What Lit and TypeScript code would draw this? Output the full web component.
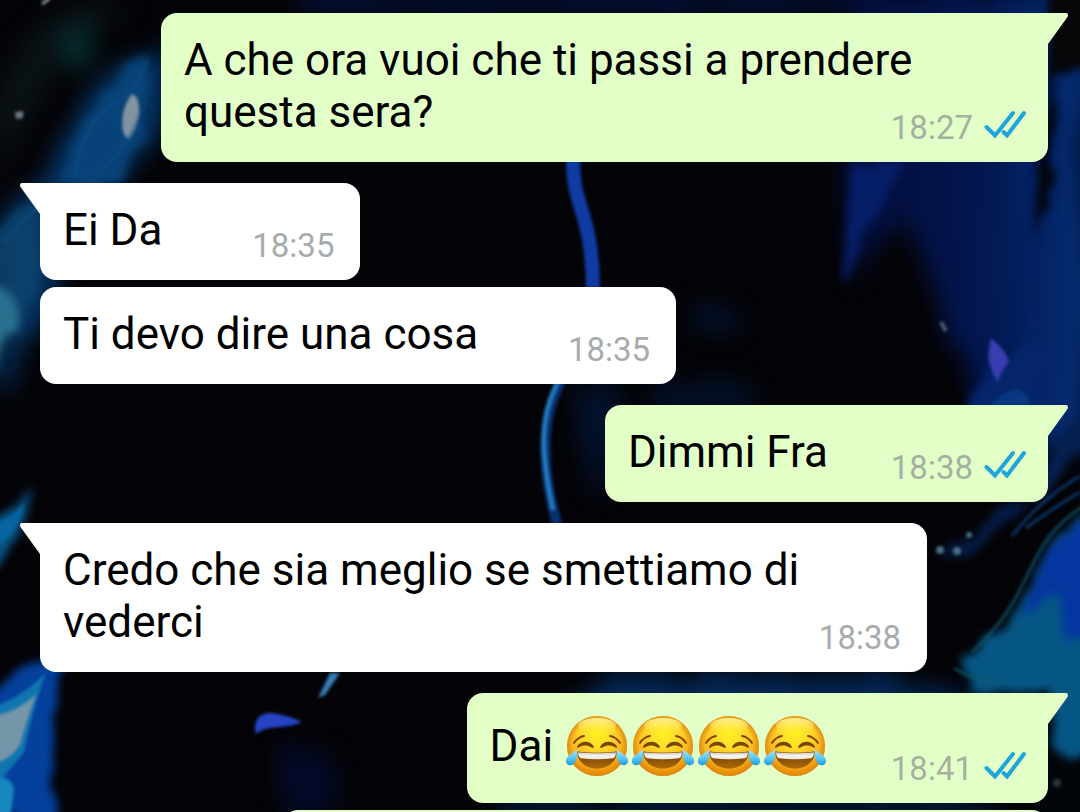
import { LitElement, html, css, svg, nothing } from "lit";
import { customElement, property } from "lit/decorators.js";

interface Message {
  text: string;
  time: string;
  own: boolean;
  first: boolean;
  joy?: number;
}

const MESSAGES: Message[] = [
  { text: "A che ora vuoi che ti passi a prendere questa sera?", time: "18:27", own: true, first: true },
  { text: "Ei Da", time: "18:35", own: false, first: true },
  { text: "Ti devo dire una cosa", time: "18:35", own: false, first: false },
  { text: "Dimmi Fra", time: "18:38", own: true, first: true },
  { text: "Credo che sia meglio se smettiamo di vederci", time: "18:38", own: false, first: true },
  { text: "Dai ", time: "18:41", own: true, first: true, joy: 4 },
];

/* Face with tears of joy */
@customElement("joy-face")
export class JoyFace extends LitElement {
  static styles = css`
    :host { display: inline-block; width: 66px; height: 65px; vertical-align: -18px; }
    .face { display: block; width: 100%; height: 100%; }
  `;
  render() {
    return html`<svg class="face" viewBox="-1 0 66 65" role="img" aria-label="Faccina che ride con lacrime">
      <defs>
        <radialGradient id="skin" cx="32" cy="20" r="43" gradientUnits="userSpaceOnUse">
          <stop offset="0" stop-color="#fff01f" />
          <stop offset=".32" stop-color="#fedd2b" />
          <stop offset=".62" stop-color="#fbb91f" />
          <stop offset="1" stop-color="#e88806" />
        </radialGradient>
        <radialGradient id="edge" cx="32" cy="32" r="30" gradientUnits="userSpaceOnUse">
          <stop offset=".8" stop-color="#e08a10" stop-opacity="0" />
          <stop offset="1" stop-color="#d98512" stop-opacity=".8" />
        </radialGradient>
        <linearGradient id="shine" x1="0" y1="0" x2="0" y2="1">
          <stop offset="0" stop-color="#fff6a8" stop-opacity=".9" />
          <stop offset="1" stop-color="#fff34a" stop-opacity="0" />
        </linearGradient>
        <linearGradient id="mouth" x1="0" y1="0" x2="0" y2="1">
          <stop offset="0" stop-color="#6b3b04" />
          <stop offset="1" stop-color="#ad6a08" />
        </linearGradient>
        <linearGradient id="teeth" x1="0" y1="0" x2="0" y2="1">
          <stop offset="0" stop-color="#c9c4bd" />
          <stop offset=".5" stop-color="#f7f5f2" />
          <stop offset="1" stop-color="#ece7e0" />
        </linearGradient>
        <linearGradient id="tear" x1="0" y1="0" x2="0" y2="1">
          <stop offset="0" stop-color="#a5e6fa" />
          <stop offset=".6" stop-color="#55c3f3" />
          <stop offset="1" stop-color="#1d97dd" />
        </linearGradient>
      </defs>
      <circle cx="32" cy="32" r="30" fill="url(#skin)" />
      <circle cx="32" cy="32" r="30" fill="url(#edge)" />
      <ellipse cx="32" cy="12" rx="19" ry="8" fill="url(#shine)" />
      <g fill="none" stroke="#7a4606" stroke-linecap="round">
        <path d="M9 29Q13 23 19 22" stroke-width="1.800" />
        <path d="M55 29Q51 23 45 22" stroke-width="1.800" />
      </g>
      <g fill="#7a4606">
        <path d="M12 32.500C15 26.500 25 26 28.500 32C29.500 34 28 34.500 26 33.200C22 31 18 31.200 14.500 33C12.500 34.200 11.500 33.600 12 32.500Z" />
        <path d="M52 32.500C49 26.500 39 26 35.500 32C34.500 34 36 34.500 38 33.200C42 31 46 31.200 49.500 33C51.500 34.200 52.500 33.600 52 32.500Z" />
      </g>
      <path d="M12 37.500Q32 40 52 37.500C51.500 48 43 54.500 32 54.500S12.500 48 12 37.500Z" fill="url(#mouth)" />
      <path d="M13 38.200Q32 40.500 51 38.200C51 41.200 50 43.600 48 44.200Q32 46.500 16 44.200C14 43.600 13 41.200 13 38.200Z" fill="url(#teeth)" />
      <path d="M12 35.500C13.500 42 11 51 5.500 51.300C.500 51.500-.500 46 3 42.500C6 39.500 9.500 38 12 35.500Z" fill="url(#tear)" />
      <path d="M52 35.500C50.500 42 53 51 58.500 51.300C63.500 51.500 64.500 46 61 42.500C58 39.500 54.500 38 52 35.500Z" fill="url(#tear)" />
    </svg>`;
  }
}

/* One speech bubble with its time and read marks */
@customElement("chat-bubble")
export class ChatBubble extends LitElement {
  @property({ attribute: false }) message!: Message;

  static styles = css`
    :host { display: flex; }
    .bubble {
      position: relative;
      display: grid;
      box-sizing: border-box;
      max-width: 88%;
      padding: 21px 22px 14px 23px;
      border-radius: 16px;
      background: #ffffff;
      color: #000000;
    }
    .own { margin-left: auto; background: #e1ffc7; }
    .first { border-top-left-radius: 0; }
    .own.first { border-top-left-radius: 16px; border-top-right-radius: 0; }
    .tail { position: absolute; top: 0; right: 100%; width: 20px; height: 31px; fill: #ffffff; }
    .own .tail { right: auto; left: 100%; fill: #e1ffc7; transform: scaleX(-1); }
    .text { grid-area: 1 / 1; margin: 0; padding-bottom: 10px; font-size: 44px; line-height: 52px; }
    .room { display: inline-block; width: 176px; height: 1px; }
    .own .room { width: 198px; }
    .meta {
      grid-area: 1 / 1;
      place-self: end;
      display: flex;
      align-items: center;
      gap: 11px;
      padding-right: 4px;
      font-size: 33px;
      line-height: 40px;
      color: #a6abad;
    }
    .own .meta { padding-right: 0; color: #a5b09f; }
    .ticks { width: 42px; height: 28px; margin-bottom: 8px; fill: none; stroke: #1fa5dc; stroke-width: 4; stroke-linecap: round; }
  `;

  render() {
    const m = this.message;
    return html`<article class="bubble ${m.own ? "own" : ""} ${m.first ? "first" : ""}">
      ${m.first
        ? html`<svg class="tail" viewBox="0 0 20 31" aria-hidden="true"><path d="M21 0H2Q-1 0 .500 4L20 31H21Z" /></svg>`
        : nothing}
      <p class="text">${m.text}${Array.from({ length: m.joy ?? 0 }, () => html`<joy-face></joy-face>`)}<span class="room"></span></p>
      <div class="meta">
        <time>${m.time}</time>
        ${m.own
          ? html`<svg class="ticks" viewBox="0 0 42 28" role="img" aria-label="Letto">
              <path d="M2.500 17L11 25.500L29 3M19.500 22L23 25.500L40 3" />
            </svg>`
          : nothing}
      </div>
    </article>`;
  }
}

/* Dark ink painting behind the conversation */
const wallpaper = svg`
  <defs>
    <filter id="b1" color-interpolation-filters="sRGB" x="-50%" y="-50%" width="200%" height="200%"><feGaussianBlur stdDeviation="1.500" /></filter>
    <filter id="b4" color-interpolation-filters="sRGB" filterUnits="userSpaceOnUse" x="-60" y="-60" width="1200" height="940">
      <feTurbulence type="fractalNoise" baseFrequency=".05 .02" numOctaves="3" seed="4" result="n" />
      <feDisplacementMap in="SourceGraphic" in2="n" scale="20" xChannelSelector="R" yChannelSelector="G" />
      <feGaussianBlur stdDeviation="4" />
    </filter>
    <filter id="b8" color-interpolation-filters="sRGB" filterUnits="userSpaceOnUse" x="-60" y="-60" width="1200" height="940">
      <feTurbulence type="fractalNoise" baseFrequency=".03 .012" numOctaves="3" seed="9" result="n" />
      <feDisplacementMap in="SourceGraphic" in2="n" scale="30" xChannelSelector="R" yChannelSelector="G" />
      <feGaussianBlur stdDeviation="11" />
    </filter>
    <linearGradient id="right" x1="830" x2="1080" y1="0" y2="0" gradientUnits="userSpaceOnUse">
      <stop offset="0" stop-color="#030c38" />
      <stop offset=".6" stop-color="#03164f" />
      <stop offset="1" stop-color="#042c72" />
    </linearGradient>
  </defs>
  <rect width="1080" height="812" fill="#040408" />
  <g filter="url(#b8)">
    <path d="M20 40Q60 0 130 5L60 60Q20 120 0 200V90Z" fill="#0a1216" />
    <path d="M170 45L165 110Q140 170 100 200L0 400V225Q40 190 62 150Q80 90 120 70Z" fill="#053464" />
    <path d="M60 30H95V70H65Z" fill="#062a2c" />
    <path d="M842 -10H1090V450H985L945 320L905 215L850 280Z" fill="url(#right)" />
    <path d="M300 -10H840V12H300Z" fill="#04103a" />
    <path d="M600 675H880L1000 700V720H560Z" fill="#042654" />
    <path d="M690 310H735V330H690ZM660 385H740V410H650ZM575 385H610V490H590Z" fill="#03122e" />
    <path d="M285 750H330V812H280Z" fill="#030a2a" />
    <path d="M500 803H1000V820H500Z" fill="#042048" />
  </g>
  <g filter="url(#b4)">
    <path d="M152 55Q146 100 138 145Q130 165 118 183H60Q70 140 85 112Q115 95 128 62Z" fill="#08477c" opacity=".85" />
    <path d="M-10 240Q15 210 40 194V290Q20 320 -10 375Z" fill="#0d436c" opacity=".85" />
    <path d="M-10 285Q20 290 16 330L-10 360Z" fill="#29708f" />
    <path d="M-10 525Q24 505 36 478Q34 535 -10 572Z" fill="#075586" />
    <path d="M38 660H64Q52 700 52 740T60 820H-20V700Z" fill="#04409c" />
    <path d="M1100 505Q1050 530 1030 585Q1010 630 962 660L968 692H1048L1060 760L1100 750Z" fill="#065684" />
    <path d="M1100 510Q1052 535 1036 580L1022 612L1056 594Q1066 600 1068 640H1100Z" fill="#0536a0" />
    <path d="M852 162H905Q880 210 862 245L838 280Z" fill="#061e68" />
    <path d="M1054 40V165L1048 210L1036 240L1036 160Z" fill="#02050d" />
    <path d="M1048 -10H1100V72H1048Z" fill="#060609" />
    <path d="M985 370Q1020 340 1048 345L1040 410H965Z" fill="#05256b" />
    <path d="M1048 450L1085 410V445L1030 510Z" fill="#062050" />
    <path d="M940 562Q960 540 1010 502H1030Q1000 530 965 556Z" fill="#051c48" />
    <path d="M1048 752L1100 770V830H1030Z" fill="#030609" />
  </g>
  <g filter="url(#b1)">
    <path d="M132 94C142 96 142 124 129 139C119 136 120 108 132 94Z" fill="#8292a0" />
    <path d="M15 112L23 111V118L16 119Z" fill="#6e7880" />
    <path d="M42 4L50 -2" stroke="#8996a0" stroke-width="3" />
    <path d="M4 245Q20 220 40 205M75 175Q85 120 112 105T148 60M100 170Q128 150 146 100" stroke="#125088" stroke-width="3" fill="none" opacity=".4" />
    <path d="M-5 522Q14 518 24 502Q22 530 -5 548Z" fill="#0867a8" opacity=".8" />
    <path d="M-5 706Q24 696 46 672Q34 705 24 752L-5 788Z" fill="#127ab0" opacity=".9" />
    <path d="M-5 716Q20 710 36 694Q26 724 20 745Q10 760 -5 763Z" fill="#7595a8" />
    <path d="M-5 778Q12 775 14 790L10 820H-5Z" fill="#1487bd" />
    <path d="M573 160C573 210 592 210 593 288" fill="none" stroke="#0f3ba2" stroke-width="14" />
    <path d="M561 382C542 415 540 465 557 524" fill="none" stroke="#06306f" stroke-width="10" />
    <path d="M558 382C540 415 540 450 553 510" fill="none" stroke="#247abd" stroke-width="5" />
    <path d="M256 734C252 718 262 712 273 713Q290 716 302 722C285 730 268 724 256 734Z" fill="#2444c3" />
    <path d="M330 673H340L325 695L318 698Z" fill="#377bb4" />
    <path d="M991 338Q1006 350 1009 362Q1001 370 998 382Q990 370 988 356Z" fill="#3a3db0" />
    <path d="M941 322L946 331" stroke="#525875" stroke-width="4" />
    <path d="M954 668Q975 682 1005 682M1085 505C1020 545 1040 590 972 652" fill="none" stroke="#145a70" stroke-width="3" opacity=".7" />
    <path d="M1026 528Q1050 510 1080 492M1012 536Q1040 500 1080 476" fill="none" stroke="#0a3566" stroke-width="3" />
    <path d="M990 406Q1004 390 1018 390Q1030 394 1030 406Z" fill="#0b4c98" opacity=".5" />
    <g fill="#4a7084"><circle cx="940" cy="550" r="4" /><circle cx="957" cy="551" r="4" /><circle cx="969" cy="535" r="3" /></g>
    <circle cx="1057" cy="783" r="4" fill="#28343c" />
  </g>`;

@customElement("app-root")
export class AppRoot extends LitElement {
  static styles = css`
    :host {
      display: block;
      position: relative;
      height: 100vh;
      overflow: hidden;
      font-family: Roboto, "Noto Sans", sans-serif;
    }
    .wallpaper { position: absolute; inset: 0; width: 100%; height: 100%; }
    .chat { position: relative; display: flex; flex-direction: column; padding: 13px 32px 0 40px; }
    .chat chat-bubble + chat-bubble { margin-top: 21px; }
    .chat chat-bubble.follow { margin-top: 7px; }
    .next {
      align-self: flex-end;
      box-sizing: border-box;
      width: 76%;
      height: 97px;
      margin-top: 7px;
      border-radius: 16px;
      background: #e1ffc7;
    }
  `;

  render() {
    return html`
      <svg class="wallpaper" viewBox="0 0 1080 812" preserveAspectRatio="xMidYMid slice" aria-hidden="true">${wallpaper}</svg>
      <main class="chat">
        ${MESSAGES.map((m) => html`<chat-bubble class=${m.first ? "" : "follow"} .message=${m}></chat-bubble>`)}
        <div class="next"></div>
      </main>
    `;
  }
}
